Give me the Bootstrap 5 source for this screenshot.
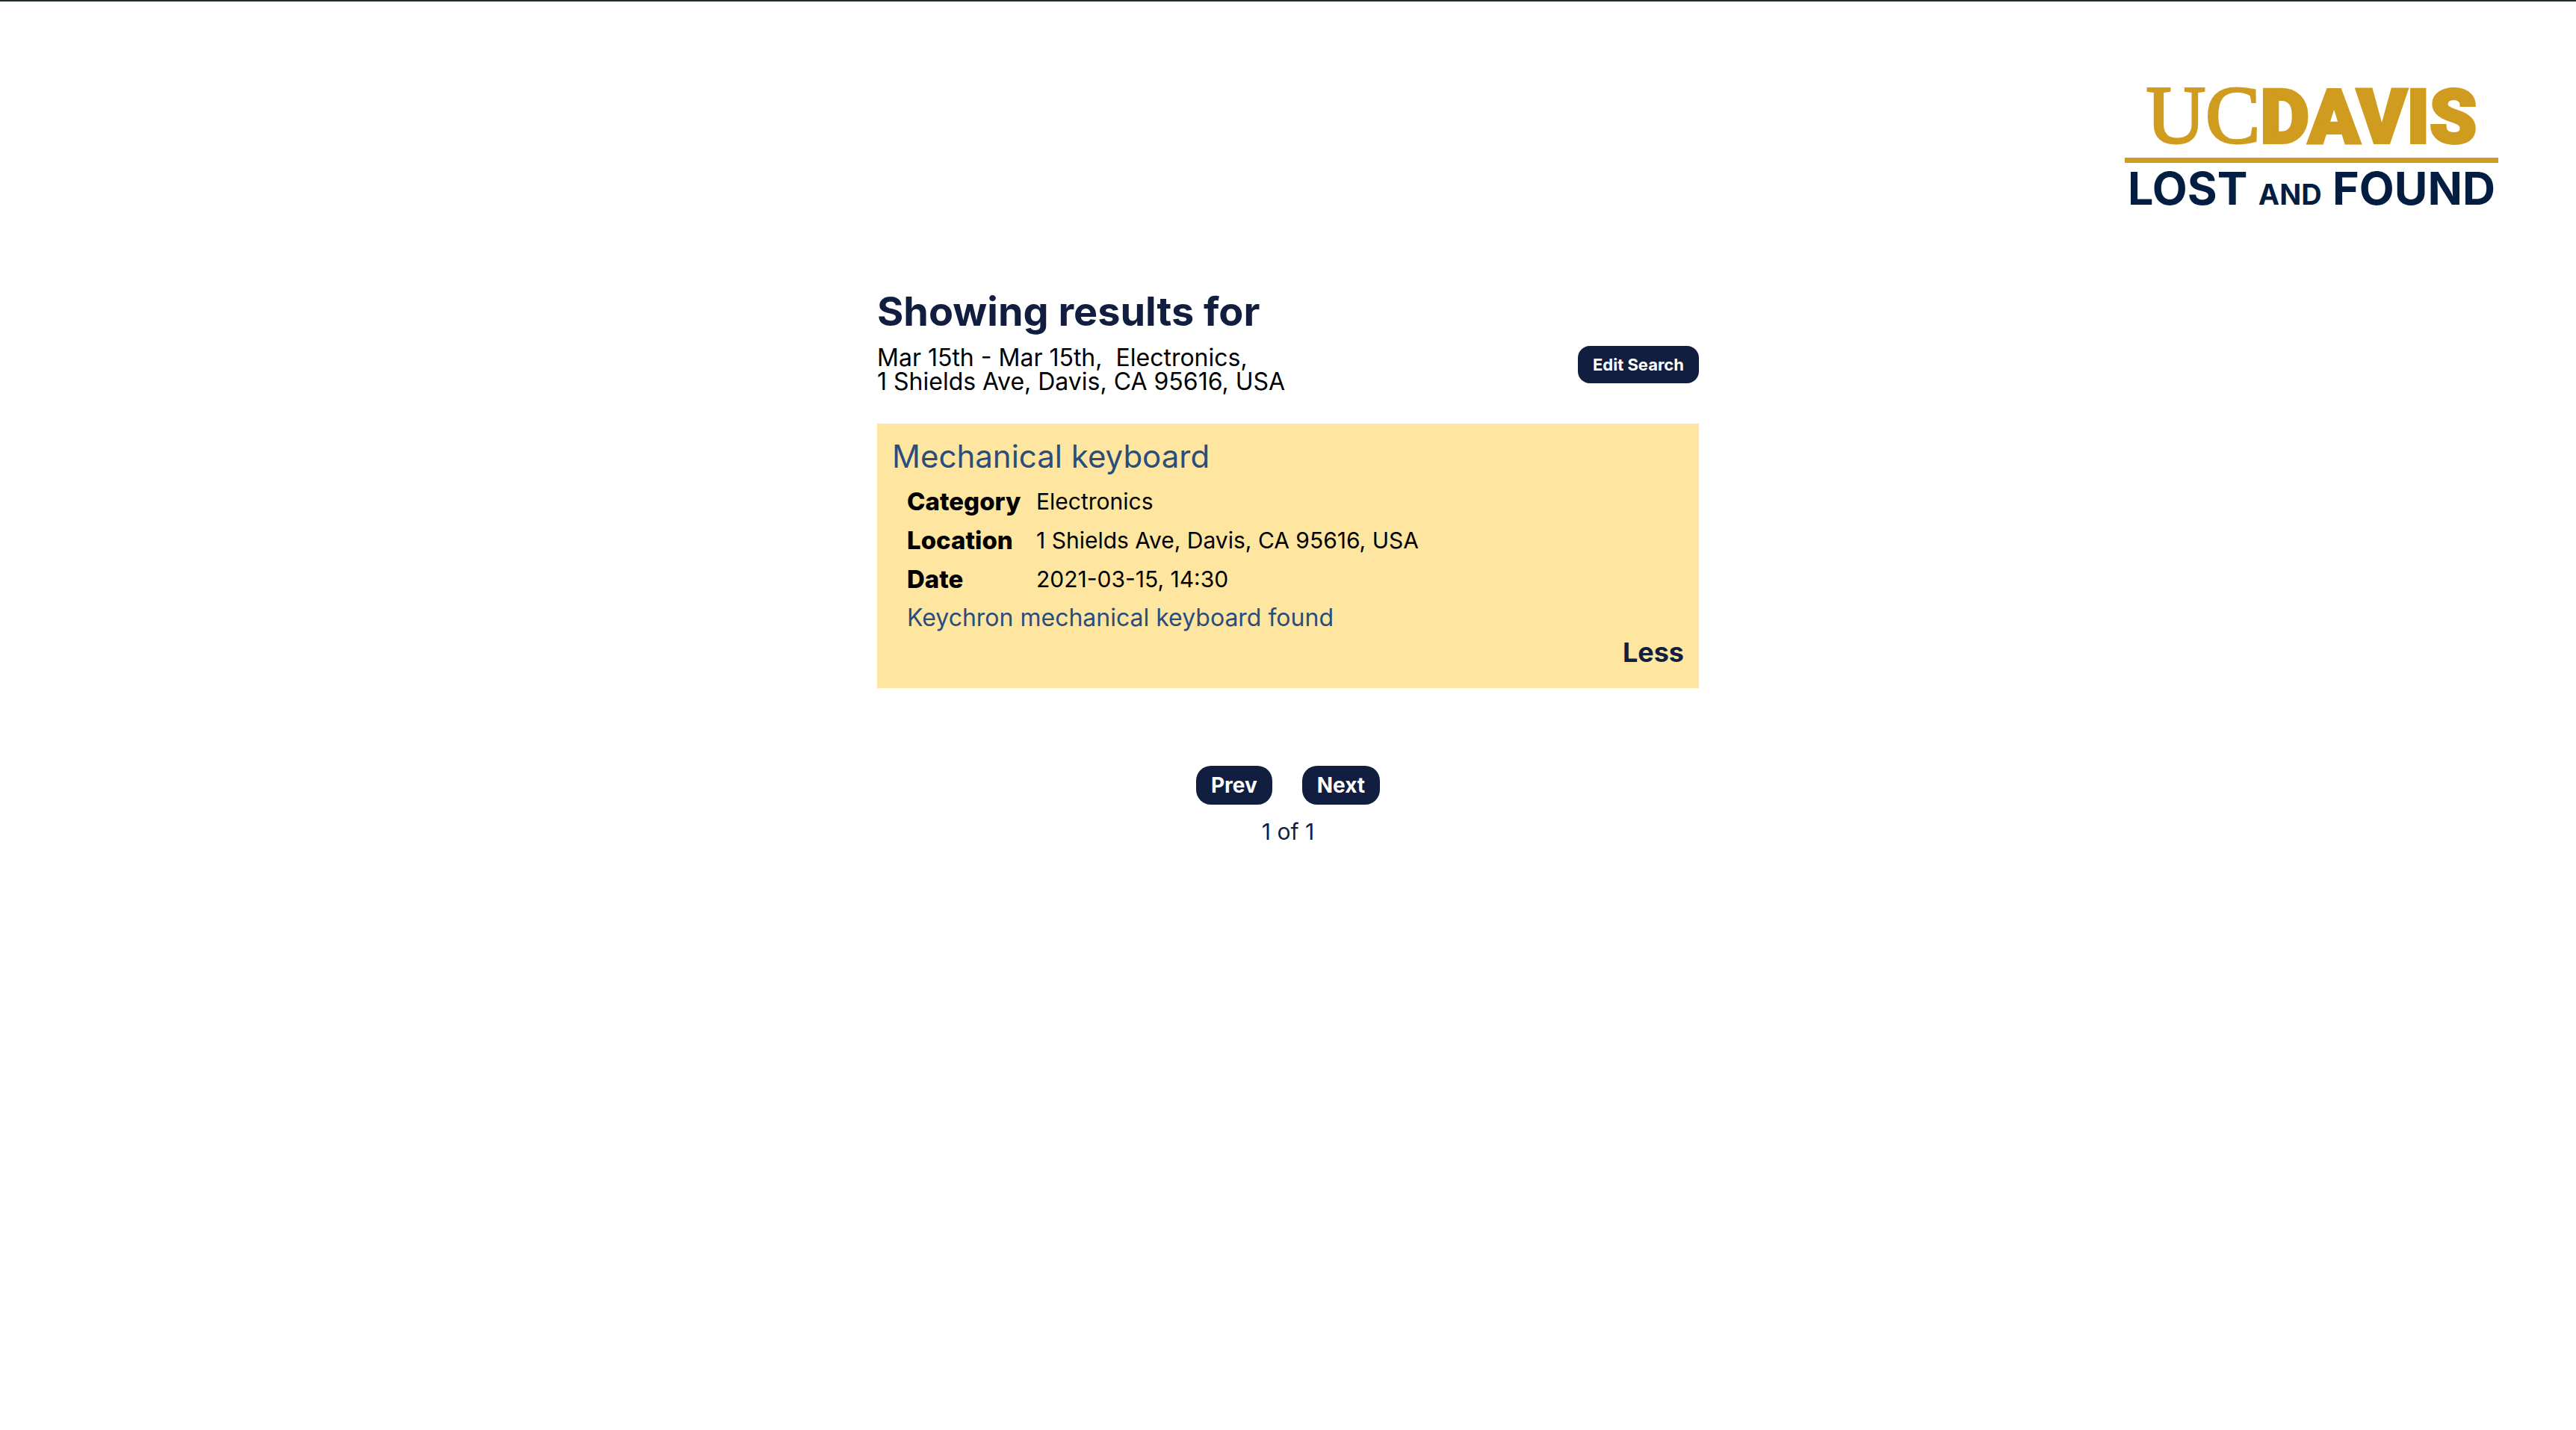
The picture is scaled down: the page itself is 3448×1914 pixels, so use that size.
<!DOCTYPE html>
<html lang="en">
<head>
<meta charset="utf-8">
<meta name="viewport" content="width=device-width, initial-scale=1">
<title>UC Davis Lost and Found</title>
<link href="https://cdn.jsdelivr.net/npm/bootstrap@5.3.0/dist/css/bootstrap.min.css" rel="stylesheet">
<style>
  :root { --navy: #111e3f; --gold: #cf9c1f; --steel: #2a4d7c; --cream: #fee6a1; }
  body { font-family: Inter, "Open Sans", sans-serif; font-size: 32px; line-height: 32px; color: #000; background: #fff; border-top: 2px solid #222d2f; }
  .site-header { padding: 108px 104px 0; }
  .brand { width: 500px; color: #031e41; }
  .brand-uc { font: 400 110px/88px "Liberation Serif", serif; color: var(--gold); -webkit-text-stroke: 3px var(--gold); }
  .brand-davis { font: 900 101px/88px Roboto, sans-serif; color: var(--gold); -webkit-text-stroke: 4px var(--gold); }
  .brand-rule { height: 7px; margin-top: 10px; background: var(--gold); }
  .brand-sub { font-size: 61px; line-height: 68px; font-weight: 700; white-space: nowrap; }
  .brand-sub small { font-size: 38px; font-weight: 700; }
  .results { max-width: 1100px; padding-top: 93px; }
  .results-title { font-size: 54px; line-height: 60px; font-weight: 700; color: var(--navy); }
  .btn-navy { --bs-btn-color: #fff; --bs-btn-bg: var(--navy); --bs-btn-border-width: 0; --bs-btn-hover-color: #fff; --bs-btn-hover-bg: #22335f; --bs-btn-active-color: #fff; --bs-btn-active-bg: #0a142d; --bs-btn-font-weight: 700; --bs-btn-padding-x: 20px; }
  .btn-edit { --bs-btn-font-size: 22px; --bs-btn-line-height: 26px; --bs-btn-padding-y: 12px; --bs-btn-border-radius: 16px; }
  .btn-page { --bs-btn-font-size: 28px; --bs-btn-line-height: 32px; --bs-btn-padding-y: 10px; --bs-btn-border-radius: 20px; }
  .item-card { background: var(--cream); padding: 20px 20px 28px; margin-top: 40px; }
  .item-title { font-size: 42px; line-height: 48px; font-weight: 400; color: var(--steel); }
  .item-body { padding: 10px 20px 0; line-height: 52px; }
  .item-facts { display: grid; grid-template-columns: 153px 1fr; column-gap: 20px; font-size: 30px; }
  .item-facts dt { font-size: 33px; font-weight: 800; }
  .item-note { color: var(--steel); }
  .btn-less { --bs-btn-color: var(--navy); --bs-btn-font-size: 36px; --bs-btn-line-height: 40px; --bs-btn-font-weight: 700; --bs-btn-padding-x: 0; --bs-btn-padding-y: 0; --bs-btn-border-width: 0; }
  .pager { gap: 40px; margin-top: 104px; }
  .page-count { color: var(--navy); margin-top: 20px; font-size: 30px; }
</style>
<script src="https://cdn.jsdelivr.net/npm/bootstrap@5.3.0/dist/js/bootstrap.bundle.min.js"></script>
</head>
<body>
<header class="site-header d-flex justify-content-end">
  <a href="#" class="brand d-block text-decoration-none">
    <span class="d-flex justify-content-center align-items-baseline"><span class="brand-uc">UC</span><span class="brand-davis">DAVIS</span></span>
    <span class="brand-rule d-block"></span>
    <span class="brand-sub d-block text-center">LOST <small>AND</small> FOUND</span>
  </a>
</header>
<main class="results container-fluid px-0">
  <h1 class="results-title mb-3">Showing results for</h1>
  <div class="d-flex justify-content-between align-items-start">
    <p class="mb-0">Mar 15th - Mar 15th,&nbsp; Electronics,<br>1 Shields Ave, Davis, CA 95616, USA</p>
    <button type="button" class="btn btn-navy btn-edit">Edit Search</button>
  </div>
  <article class="item-card">
    <h2 class="item-title mb-0">Mechanical keyboard</h2>
    <div class="item-body">
      <dl class="item-facts mb-0">
        <dt>Category</dt><dd class="mb-0">Electronics</dd>
        <dt>Location</dt><dd class="mb-0">1 Shields Ave, Davis, CA 95616, USA</dd>
        <dt>Date</dt><dd class="mb-0">2021-03-15, 14:30</dd>
      </dl>
      <p class="item-note mb-0">Keychron mechanical keyboard found</p>
    </div>
    <div class="d-flex justify-content-end"><button type="button" class="btn btn-less">Less</button></div>
  </article>
  <nav class="pager d-flex justify-content-center" aria-label="Result pages">
    <button type="button" class="btn btn-navy btn-page">Prev</button>
    <button type="button" class="btn btn-navy btn-page">Next</button>
  </nav>
  <p class="page-count text-center mb-0">1 of 1</p>
</main>
</body>
</html>
